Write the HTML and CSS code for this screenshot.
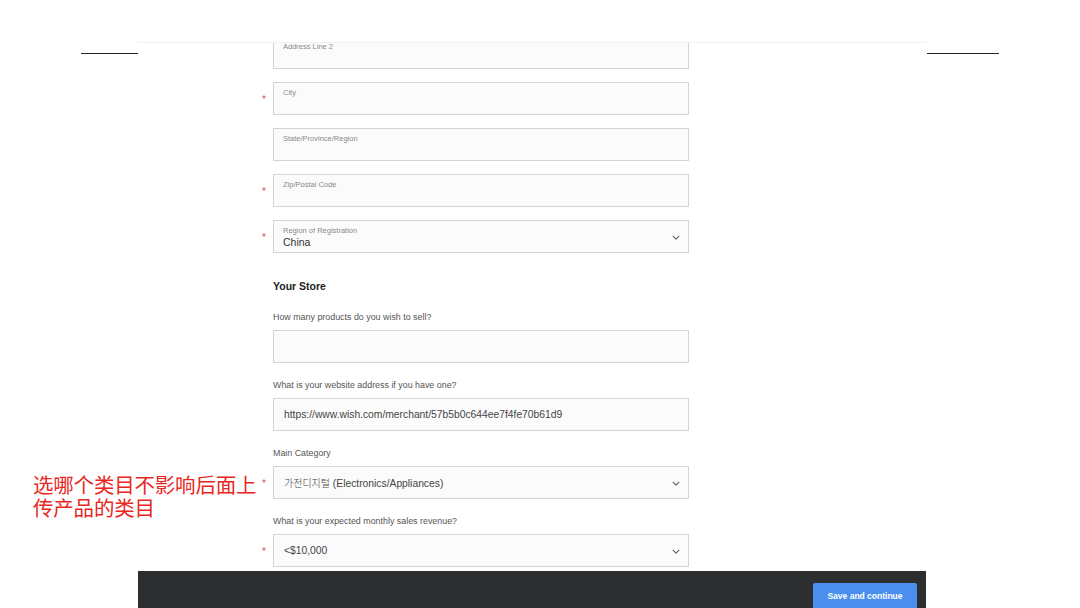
FILE: index.html
```html
<!DOCTYPE html>
<html>
<head>
<meta charset="utf-8">
<link rel="stylesheet" href="styles.css">
</head>
<body>
<div class="slide">
  <div class="rule rule-left"></div>
  <div class="rule rule-right"></div>

  <div class="shot">
    <div class="form">
      <div class="row">
        <div class="field"><span class="flabel">Address Line 2</span></div>
      </div>
      <div class="row req">
        <span class="star">*</span>
        <div class="field"><span class="flabel">City</span></div>
      </div>
      <div class="row">
        <div class="field"><span class="flabel">State/Province/Region</span></div>
      </div>
      <div class="row req">
        <span class="star">*</span>
        <div class="field"><span class="flabel">Zip/Postal Code</span></div>
      </div>
      <div class="row req">
        <span class="star">*</span>
        <div class="field select"><span class="flabel">Region of Registration</span><span class="fvalue">China</span>
          <svg class="chev" viewBox="0 0 10 6"><path d="M1 1l4 4 4-4" fill="none" stroke="#666" stroke-width="1.4"/></svg>
        </div>
      </div>

      <h3 class="section">Your Store</h3>

      <p class="q q-first">How many products do you wish to sell?</p>
      <div class="row">
        <div class="field"></div>
      </div>

      <p class="q">What is your website address if you have one?</p>
      <div class="row">
        <div class="field plain"><span class="pvalue">https://www.wish.com/merchant/57b5b0c644ee7f4fe70b61d9</span></div>
      </div>

      <p class="q">Main Category</p>
      <div class="row req">
        <span class="star">*</span>
        <div class="field plain select"><span class="pvalue"><span class="ko">가전디지털</span> (Electronics/Appliances)</span>
          <svg class="chev" viewBox="0 0 10 6"><path d="M1 1l4 4 4-4" fill="none" stroke="#666" stroke-width="1.4"/></svg>
        </div>
      </div>

      <p class="q">What is your expected monthly sales revenue?</p>
      <div class="row req">
        <span class="star">*</span>
        <div class="field plain select"><span class="pvalue">&lt;$10,000</span>
          <svg class="chev" viewBox="0 0 10 6"><path d="M1 1l4 4 4-4" fill="none" stroke="#666" stroke-width="1.4"/></svg>
        </div>
      </div>
    </div>

    <div class="bar">
      <button class="save">Save and continue</button>
    </div>
  </div>

  <div class="note">选哪个类目不影响后面上<br>传产品的类目</div>
</div>
</body>
</html>
```

FILE: styles.css
```css
* { box-sizing: border-box; }
html, body { margin: 0; padding: 0; background: #fff; }
body { font-family: "Liberation Sans", Arial, sans-serif; }

.slide {
  position: relative;
  width: 1080px;
  height: 608px;
  overflow: hidden;
  background: #fff;
}

.rule {
  position: absolute;
  top: 53px;
  height: 1px;
  background: #222;
}
.rule-left { left: 81px; width: 57px; }
.rule-right { left: 927px; width: 72px; }

.note {
  position: absolute;
  z-index: 2;
  left: 33px;
  top: 473px;
  font-family: "Noto Sans CJK SC", sans-serif;
  font-size: 20.5px;
  line-height: 23px;
  color: #e8271f;
  letter-spacing: -0.2px;
}

.shot {
  position: absolute;
  left: 138px;
  top: 42px;
  width: 788px;
  height: 566px;
  overflow: hidden;
  background: #fff;
  border-top: 1px solid #f0f0f0;
  display: flex;
  flex-direction: column;
}

.form {
  margin-left: 120px;
  padding-left: 15px;
  margin-top: -7px;
  width: 431px;
  flex: 1 1 0;
  min-height: 0;
  overflow: hidden;
}

.row {
  position: relative;
  margin-bottom: 13px;
}
.star {
  position: absolute;
  left: -11px;
  top: 50%;
  transform: translateY(-45%);
  color: #d9534f;
  font-size: 10px;
  line-height: 10px;
}

.field {
  position: relative;
  height: 33px;
  border: 1px solid #d4d4d4;
  background: #fbfbfb;
  padding: 5px 9px 0;
}
.flabel {
  display: block;
  font-size: 7.5px;
  line-height: 9px;
  color: #8a8a8a;
}
.fvalue {
  display: block;
  font-size: 10.5px;
  line-height: 13px;
  color: #333;
  margin-top: 1px;
}
.field.plain {
  display: flex;
  align-items: center;
  padding: 0 10px;
}
.pvalue {
  font-size: 10.3px;
  color: #444;
}
.ko {
  font-family: "Noto Sans CJK KR", sans-serif;
  font-size: 10px;
  font-weight: 300;
}

.chev {
  position: absolute;
  right: 8px;
  top: 50%;
  width: 8px;
  height: 5px;
  margin-top: -2px;
}

.section {
  margin: 27px 0 0;
  font-size: 10.5px;
  font-weight: bold;
  color: #222;
  line-height: 13px;
}

.q {
  margin: 17px 0 8px;
  font-size: 8.9px;
  line-height: 10px;
  color: #555;
}
.q.q-first { margin-top: 19px; }

.bar {
  flex: 0 0 37px;
  height: 37px;
  background: #2c2e2f;
  display: flex;
  justify-content: flex-end;
  align-items: flex-end;
  padding-right: 9px;
  position: relative;
}
.save {
  width: 104px;
  height: 25px;
  border: none;
  border-radius: 2px 2px 0 0;
  background: #4a8fee;
  color: #fff;
  font-family: "Liberation Sans", Arial, sans-serif;
  font-size: 8.5px;
  font-weight: bold;
  padding: 0;
}
```
